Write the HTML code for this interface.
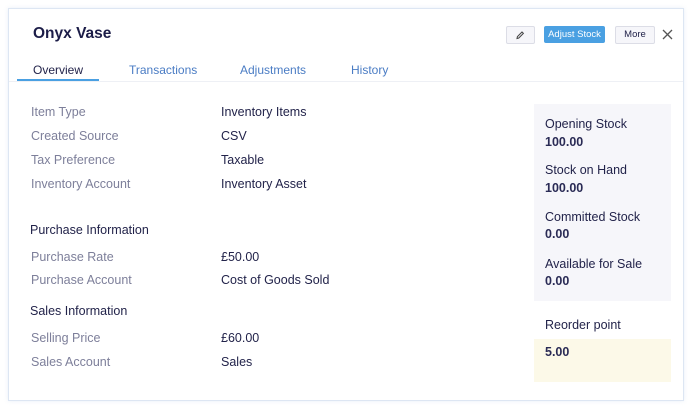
<!DOCTYPE html>
<html><head><style>
*{margin:0;padding:0;box-sizing:border-box}
body{width:691px;height:408px;background:#fff;font-family:"Liberation Sans",sans-serif;position:relative;overflow:hidden}
.card{position:absolute;left:8px;top:8px;width:676px;height:393px;border:1px solid #dde6f3;box-shadow:0 0 4px rgba(180,200,230,.3);background:#fff}
.a{position:absolute;white-space:nowrap}
.lbl{color:#7d7f9a;font-size:12.5px}
.val{color:#22234a;font-size:12.5px}
.sec{color:#22234a;font-size:12.5px}
.tab{color:#4a7cc4;font-size:12px;top:63px}
.side{color:#22234a;font-size:12.5px}
.num{color:#2a2b55;font-size:12.5px;font-weight:bold}
</style></head><body>
<div class="card"></div>
<div class="a" style="left:33px;top:25px;font-size:15.5px;font-weight:bold;color:#1c1d48">Onyx Vase</div>
<div class="a" style="left:506px;top:26px;width:29px;height:18px;border:1px solid #dcdde6;background:#f6f6fa;border-radius:2px"></div>
<svg class="a" style="left:514px;top:29px" width="12" height="12" viewBox="0 0 12 12"><path d="M3 9.5 L3.4 7.6 L8 3 L9.4 4.4 L4.8 9 Z" fill="none" stroke="#444" stroke-width="1"/></svg>
<div class="a" style="left:544px;top:26px;width:61px;height:17px;background:#4aa0e2;border-radius:2px;color:#fff;font-size:9.5px;line-height:17px;text-align:center">Adjust Stock</div>
<div class="a" style="left:615px;top:26px;width:40px;height:18px;border:1px solid #dcdde6;background:#f6f6fa;border-radius:2px;color:#22234a;font-size:9.5px;line-height:16px;text-align:center">More</div>
<svg class="a" style="left:662px;top:29px" width="11" height="11" viewBox="0 0 11 11"><path d="M1 1L10 10M10 1L1 10" stroke="#555" stroke-width="1.3"/></svg>
<div class="a" style="left:9px;top:81px;width:674px;height:1px;background:#eef0f5"></div>
<div class="a tab" style="left:33px;color:#22234a">Overview</div>
<div class="a" style="left:17px;top:79px;width:82px;height:2px;background:#4aa0e2"></div>
<div class="a tab" style="left:129px">Transactions</div>
<div class="a tab" style="left:240px">Adjustments</div>
<div class="a tab" style="left:351px">History</div>

<div class="a lbl" style="left:31px;top:105px">Item Type</div><div class="a val" style="left:221px;top:105px">Inventory Items</div>
<div class="a lbl" style="left:31px;top:129px">Created Source</div><div class="a val" style="left:221px;top:129px">CSV</div>
<div class="a lbl" style="left:31px;top:153px">Tax Preference</div><div class="a val" style="left:221px;top:153px">Taxable</div>
<div class="a lbl" style="left:31px;top:177px">Inventory Account</div><div class="a val" style="left:221px;top:177px">Inventory Asset</div>
<div class="a sec" style="left:30px;top:223px">Purchase Information</div>
<div class="a lbl" style="left:31px;top:250px">Purchase Rate</div><div class="a val" style="left:221px;top:250px">£50.00</div>
<div class="a lbl" style="left:31px;top:273px">Purchase Account</div><div class="a val" style="left:221px;top:273px">Cost of Goods Sold</div>
<div class="a sec" style="left:30px;top:304px">Sales Information</div>
<div class="a lbl" style="left:31px;top:331px">Selling Price</div><div class="a val" style="left:221px;top:331px">£60.00</div>
<div class="a lbl" style="left:31px;top:355px">Sales Account</div><div class="a val" style="left:221px;top:355px">Sales</div>

<div class="a" style="left:534px;top:104px;width:137px;height:197px;background:#f6f6fa"></div>
<div class="a side" style="left:545px;top:117px">Opening Stock</div><div class="a num" style="left:545px;top:135px">100.00</div>
<div class="a side" style="left:545px;top:163px">Stock on Hand</div><div class="a num" style="left:545px;top:181px">100.00</div>
<div class="a side" style="left:545px;top:210px">Committed Stock</div><div class="a num" style="left:545px;top:227px">0.00</div>
<div class="a side" style="left:545px;top:257px">Available for Sale</div><div class="a num" style="left:545px;top:274px">0.00</div>
<div class="a side" style="left:545px;top:318px">Reorder point</div>
<div class="a" style="left:534px;top:339px;width:137px;height:43px;background:#fcf9e8"></div>
<div class="a num" style="left:545px;top:345px">5.00</div>
</body></html>
